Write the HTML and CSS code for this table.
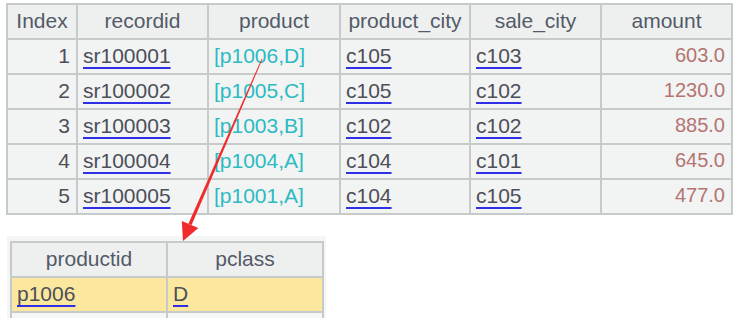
FILE: index.html
```html
<!DOCTYPE html>
<html>
<head>
<meta charset="utf-8">
<link rel="stylesheet" href="styles.css">
</head>
<body>
<div class="page">
  <div class="grid main">
    <div class="cell head">Index</div>
    <div class="cell head">recordid</div>
    <div class="cell head">product</div>
    <div class="cell head">product_city</div>
    <div class="cell head">sale_city</div>
    <div class="cell head">amount</div>

    <div class="cell num">1</div>
    <div class="cell"><span class="link">sr100001</span></div>
    <div class="cell ref">[p1006,D]</div>
    <div class="cell"><span class="link">c105</span></div>
    <div class="cell"><span class="link">c103</span></div>
    <div class="cell amt">603.0</div>

    <div class="cell num">2</div>
    <div class="cell"><span class="link">sr100002</span></div>
    <div class="cell ref">[p1005,C]</div>
    <div class="cell"><span class="link">c105</span></div>
    <div class="cell"><span class="link">c102</span></div>
    <div class="cell amt">1230.0</div>

    <div class="cell num">3</div>
    <div class="cell"><span class="link">sr100003</span></div>
    <div class="cell ref">[p1003,B]</div>
    <div class="cell"><span class="link">c102</span></div>
    <div class="cell"><span class="link">c102</span></div>
    <div class="cell amt">885.0</div>

    <div class="cell num">4</div>
    <div class="cell"><span class="link">sr100004</span></div>
    <div class="cell ref">[p1004,A]</div>
    <div class="cell"><span class="link">c104</span></div>
    <div class="cell"><span class="link">c101</span></div>
    <div class="cell amt">645.0</div>

    <div class="cell num">5</div>
    <div class="cell"><span class="link">sr100005</span></div>
    <div class="cell ref">[p1001,A]</div>
    <div class="cell"><span class="link">c104</span></div>
    <div class="cell"><span class="link">c105</span></div>
    <div class="cell amt">477.0</div>
  </div>

  <div class="panel">
    <div class="grid sub">
      <div class="cell head">productid</div>
      <div class="cell head">pclass</div>
      <div class="cell sel"><span class="link">p1006</span></div>
      <div class="cell sel"><span class="link">D</span></div>
      <div class="cell blank"></div>
      <div class="cell blank"></div>
    </div>
  </div>
</div>

<svg class="arrow" width="737" height="318" viewBox="0 0 737 318" xmlns="http://www.w3.org/2000/svg">
  <polygon points="261.6,59 262.4,59.3 191.6,225.1 188.4,223.7" fill="#ef2b2b"/>
  <polygon points="183,241 181.8,220.9 198.4,228.1" fill="#ef2b2b"/>
</svg>
</body>
</html>
```

FILE: styles.css
```css
html, body {
  margin: 0;
  padding: 0;
  background: #ffffff;
  overflow: hidden;
}

body {
  width: 737px;
  height: 318px;
  position: relative;
  font-family: "Liberation Sans", Arial, sans-serif;
  font-size: 21px;
}

.page {
  display: flex;
  flex-direction: column;
  align-items: flex-start;
  padding: 3px 0 0 6px;
}

.grid {
  display: grid;
  gap: 2px;
  padding: 2px;
  background: #c6caca;
}

.main {
  grid-template-columns: 68px 129px 130px 128px 129px 129px;
  grid-auto-rows: 33px;
}

.cell {
  background: #f2f3f3;
  line-height: 31px;
  padding: 0 5px 2px 5px;
  color: #4c4f58;
  white-space: nowrap;
  overflow: hidden;
}

.head {
  background: #eef0f0;
  text-align: center;
  color: #535a68;
}

.num {
  text-align: right;
  padding-right: 6px;
}

.ref {
  color: #2bbbc2;
}

.amt {
  text-align: right;
  padding-right: 6px;
  font-size: 20px;
  color: #b47472;
}

.link {
  text-decoration: underline;
  text-decoration-color: #2f2fe6;
  text-decoration-thickness: 2px;
  text-underline-offset: 4px;
}

.panel {
  margin-top: 21px;
  margin-left: 1px;
  padding: 5px 2px 0 3px;
  background: #f4f5f5;
  height: 77px;
  overflow: hidden;
}

.sub {
  grid-template-columns: 154px 154px;
  grid-auto-rows: 33px;
}

.sel {
  background: #fbe89e;
}

.blank {
  background: #f5f6f6;
}

.arrow {
  position: absolute;
  left: 0;
  top: 0;
  pointer-events: none;
}
```
